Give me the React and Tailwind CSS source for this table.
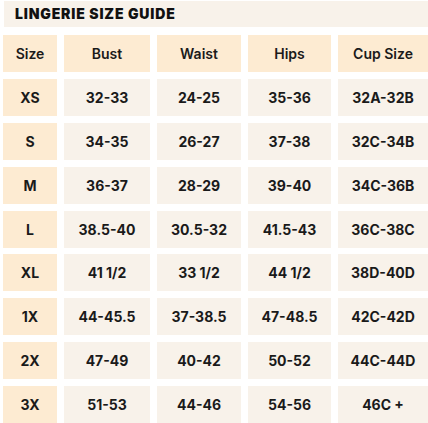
export default function App() {
  const head = ["Size", "Bust", "Waist", "Hips", "Cup Size"];
  const rows = [
    ["XS", "32-33", "24-25", "35-36", "32A-32B"],
    ["S", "34-35", "26-27", "37-38", "32C-34B"],
    ["M", "36-37", "28-29", "39-40", "34C-36B"],
    ["L", "38.5-40", "30.5-32", "41.5-43", "36C-38C"],
    ["XL", "41 1/2", "33 1/2", "44 1/2", "38D-40D"],
    ["1X", "44-45.5", "37-38.5", "47-48.5", "42C-42D"],
    ["2X", "47-49", "40-42", "50-52", "44C-44D"],
    ["3X", "51-53", "44-46", "54-56", "46C +"],
  ];
  return (
    <div className="w-[428px] h-[423px] bg-white overflow-hidden" style={{ fontFamily: "Inter, 'Noto Sans', sans-serif" }}>
      <div className="ml-[4px] mt-[1px] h-[26px] bg-[#f8f2ea] flex items-center pl-[11px]">
        <span className="text-[14px] font-black tracking-[0.06em] text-[#111] leading-none">LINGERIE SIZE GUIDE</span>
      </div>
      <div className="mt-[8px] ml-[3px] grid grid-cols-[54px_86px_84px_83px_1fr] gap-x-[7px] gap-y-[6.9px] auto-rows-[37px]">
        {head.map((h) => (
          <div key={h} className="bg-[#fdebd2] flex items-center justify-center text-[14px] font-semibold text-[#1a1a1a]">
            {h}
          </div>
        ))}
        {rows.map((r) =>
          r.map((c, i) => (
            <div
              key={r[0] + i}
              className={`${i === 0 ? "bg-[#fdebd2]" : "bg-[#f8f2ea]"} flex items-center justify-center text-[14px] font-bold text-[#1a1a1a]`}
            >
              {c}
            </div>
          ))
        )}
      </div>
    </div>
  );
}
